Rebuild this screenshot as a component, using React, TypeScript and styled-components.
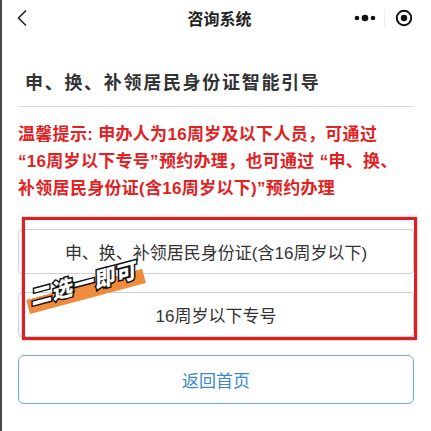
import React from "react";
import styled, { createGlobalStyle } from "styled-components";

const Global = createGlobalStyle`
  html, body { margin: 0; padding: 0; background: #fff; }
  body { font-family: "Liberation Sans", "Noto Sans CJK SC", sans-serif; }
`;

const Page = styled.div`
  width: 431px;
  height: 431px;
  overflow: hidden;
  border-left: 2px solid #4a4a4a;
  box-sizing: border-box;
  background: #fff;
`;

const NavBar = styled.div`
  height: 36px;
  display: grid;
  grid-template-columns: 90px 1fr 90px;
  align-items: center;
  padding: 0 8px 0 14px;
`;

const NavTitle = styled.div`
  text-align: center;
  font-size: 16px;
  font-weight: 700;
  color: #222;
`;

const Capsule = styled.div`
  justify-self: end;
  display: flex;
  align-items: center;
  height: 30px;
`;

const CapsuleItem = styled.div`
  width: 38px;
  display: flex;
  justify-content: center;
  align-items: center;
  & + & { border-left: 1px solid #f0f0f0; }
`;

const Content = styled.div`
  padding: 0 17px 0 16px;
`;

const Heading = styled.h1`
  margin: 0;
  padding: 34px 0 10px 7px;
  font-size: 18px;
  font-weight: 600;
  letter-spacing: 1.7px;
  color: #333;
  line-height: 26px;
  border-bottom: 1px solid #ddd;
`;

const Tip = styled.p`
  margin: 14px 0 0;
  font-size: 17px;
  font-weight: 700;
  letter-spacing: 0.3px;
  line-height: 27px;
  color: #e3211f;
`;

const Term = styled.span`
  white-space: nowrap;
`;

const OptionArea = styled.div`
  position: relative;
  margin-top: 27px;
  display: flex;
  flex-direction: column;
  gap: 18px;
`;

const OptionButton = styled.div`
  height: 45px;
  border: 1px solid #cfcfcf;
  border-radius: 4px;
  box-sizing: border-box;
  display: flex;
  align-items: center;
  justify-content: center;
  font-size: 17px;
  color: #333;
`;

const Highlight = styled.div`
  position: absolute;
  left: 4px;
  right: -3px;
  top: -12px;
  bottom: -3px;
  border: 3px solid #db1f22;
  box-shadow: 0 0 2px rgba(219, 31, 34, 0.5);
  pointer-events: none;
`;

const Sticker = styled.div`
  position: absolute;
  left: 12px;
  top: 56px;
  transform: rotate(-15deg);
  transform-origin: left bottom;
  font-family: "Noto Sans CJK SC", sans-serif;
  font-size: 21px;
  font-weight: 900;
  font-style: italic;
  letter-spacing: 1px;
  color: #fff;
  -webkit-text-stroke: 3px #111;
  paint-order: stroke fill;
  background: linear-gradient(to bottom, transparent 50%, #f08a3d 50%, #f08a3d 100%);
  padding: 0 6px 5px 4px;
  line-height: 24px;
`;

const BackButton = styled.div`
  margin-top: 18px;
  height: 49px;
  border: 1px solid #6ea8d8;
  border-radius: 6px;
  box-sizing: border-box;
  display: flex;
  align-items: center;
  justify-content: center;
  font-size: 17px;
  color: #3a88cc;
`;

const Footer = styled.div`
  margin-top: 28px;
  text-align: center;
  font-size: 16px;
  color: #555;
`;

export default function App() {
  return (
    <>
      <Global />
      <Page>
        <NavBar>
          <svg width="12" height="18" viewBox="0 0 12 18">
            <path d="M10 1.5 L2.5 9 L10 16.5" fill="none" stroke="#222" strokeWidth="1.6" />
          </svg>
          <NavTitle>咨询系统</NavTitle>
          <Capsule>
            <CapsuleItem>
              <svg width="24" height="8" viewBox="0 0 24 8">
                <circle cx="4" cy="4" r="2.3" fill="#111" />
                <circle cx="12" cy="4" r="3.3" fill="#111" />
                <circle cx="20" cy="4" r="2.3" fill="#111" />
              </svg>
            </CapsuleItem>
            <CapsuleItem>
              <svg width="18" height="18" viewBox="0 0 18 18">
                <circle cx="9" cy="9" r="7.2" fill="none" stroke="#111" strokeWidth="2" />
                <circle cx="9" cy="9" r="3.2" fill="#111" />
              </svg>
            </CapsuleItem>
          </Capsule>
        </NavBar>
        <Content>
          <Heading>申、换、补领居民身份证智能引导</Heading>
          <Tip>
            温馨提示: 申办人为16周岁及以下人员，可通过<wbr /><Term>“16周岁以下专号”</Term>预约办理，也可通过 “申、换、<wbr />补领居民身份证(含16周岁以下)”预约办理
          </Tip>
          <OptionArea>
            <OptionButton>申、换、补领居民身份证(含16周岁以下)</OptionButton>
            <OptionButton>16周岁以下专号</OptionButton>
            <Highlight />
            <Sticker>二选一即可</Sticker>
          </OptionArea>
          <BackButton>返回首页</BackButton>
          <Footer>网上咨询</Footer>
        </Content>
      </Page>
    </>
  );
}
